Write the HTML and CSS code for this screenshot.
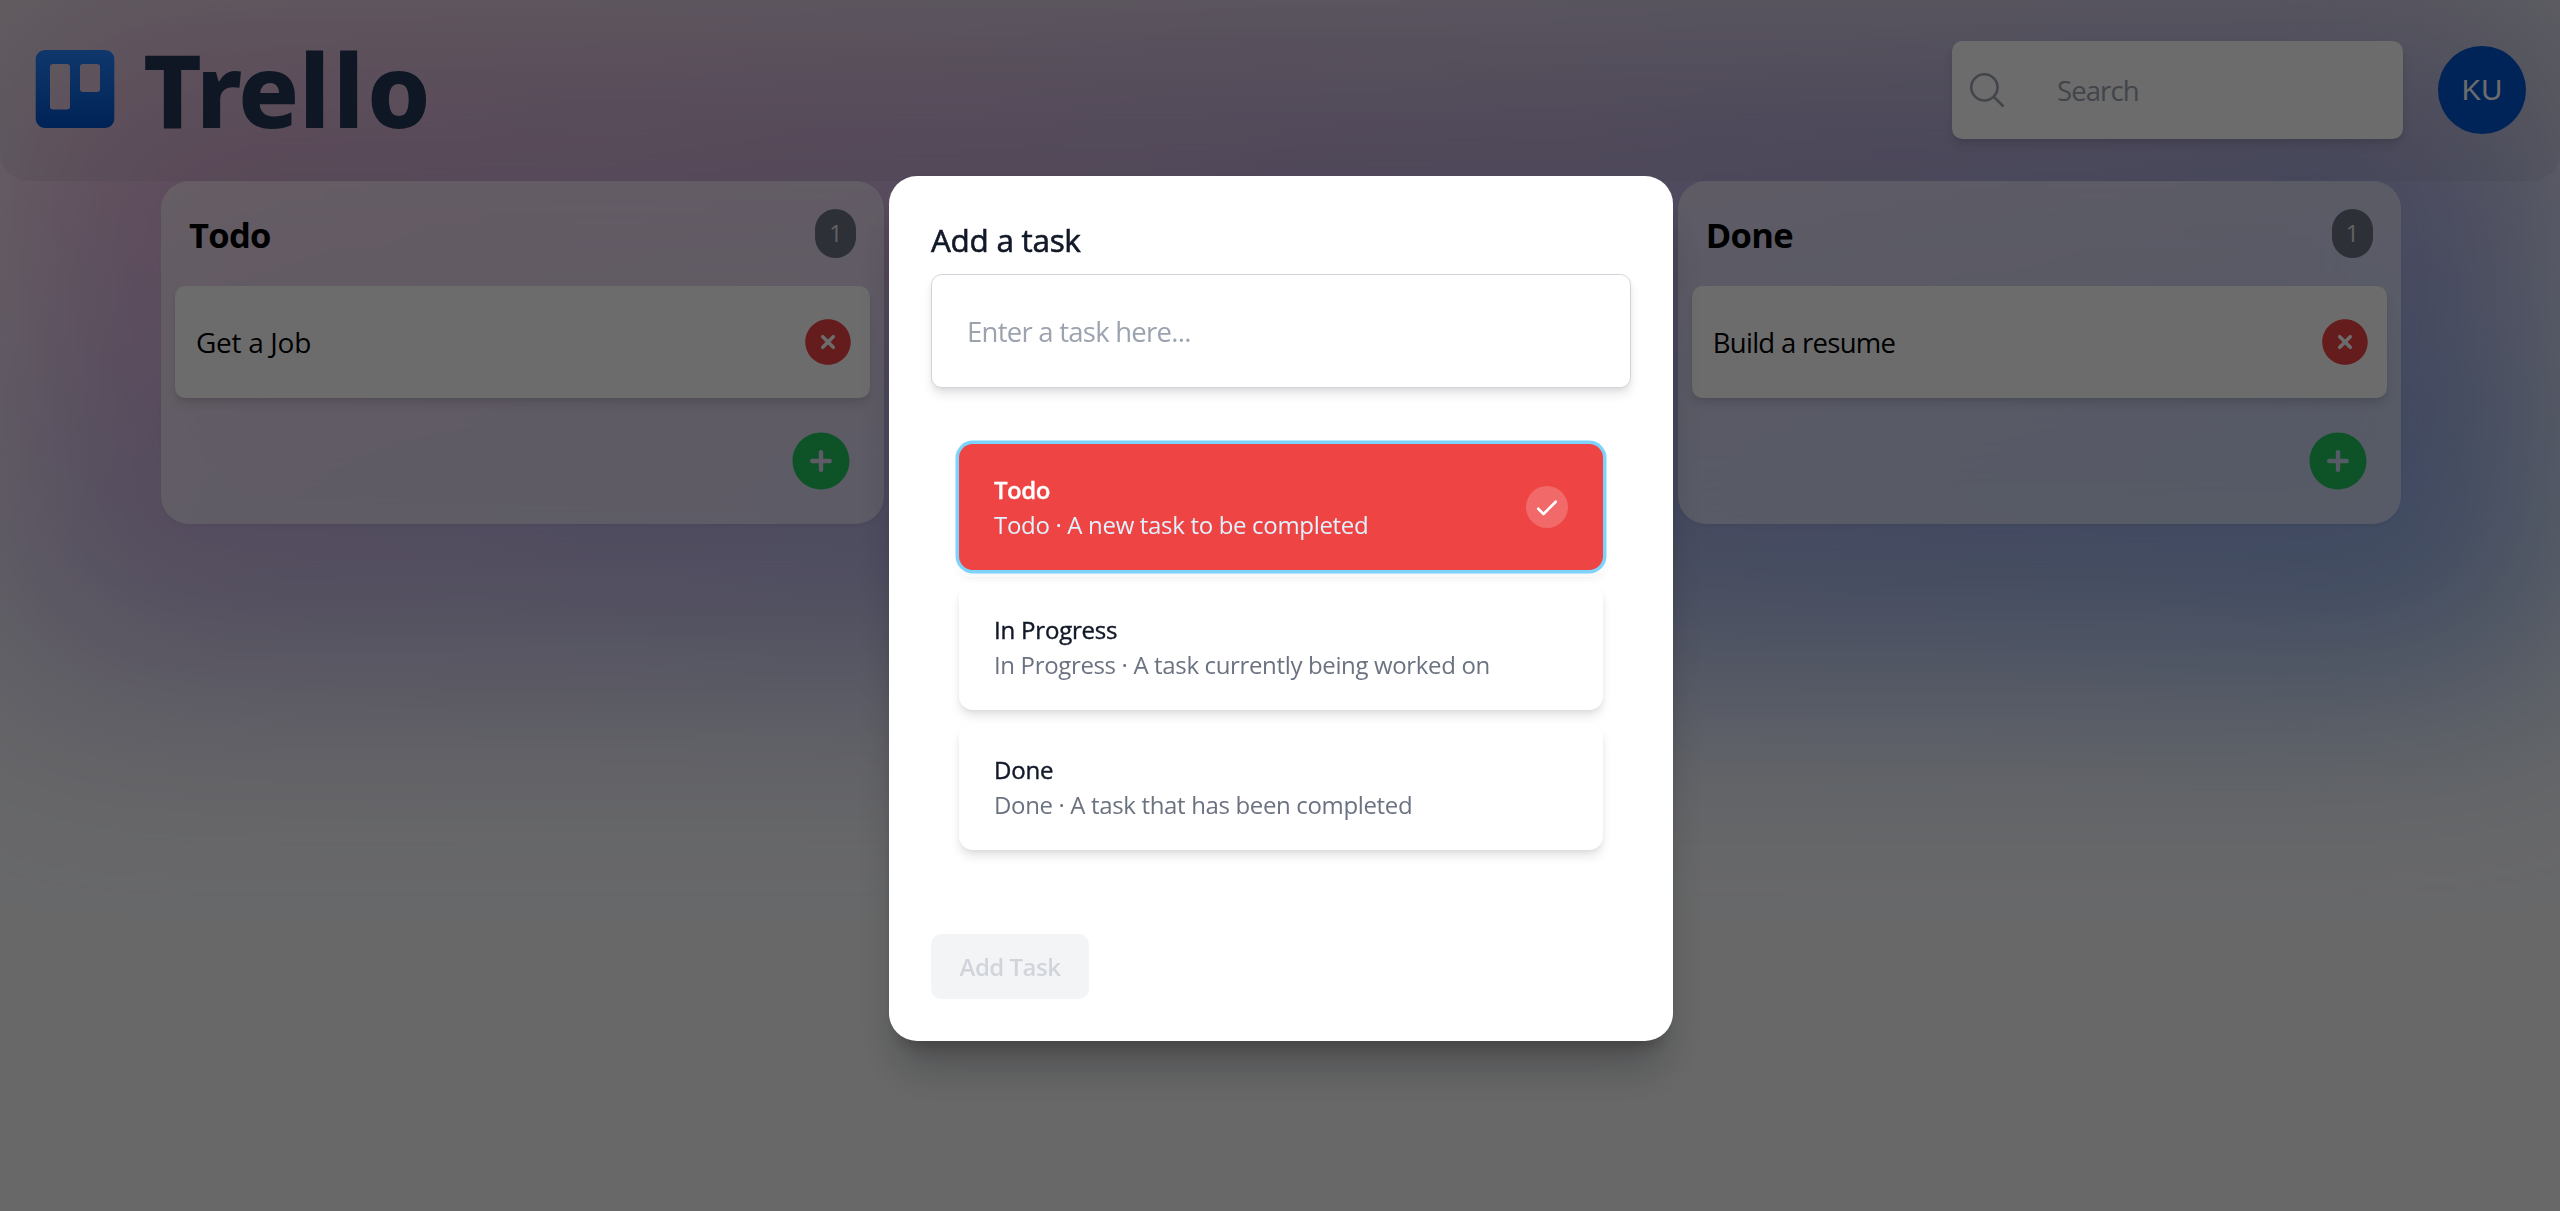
FILE: index.html
```html
<!DOCTYPE html>
<html lang="en">
<head>
<meta charset="utf-8">
<title>Trello</title>
<link rel="stylesheet" href="styles.css">
</head>
<body>
<div class="glow"></div>
<header class="header">
  <svg class="logo" viewBox="0 0 400 146" role="img" aria-label="Trello">
    <defs>
      <linearGradient id="mark" x1="0" y1="1" x2="0" y2="0">
        <stop offset="0" stop-color="#0052cc"/><stop offset="1" stop-color="#2684ff"/>
      </linearGradient>
    </defs>
    <path transform="translate(0 18)" fill="url(#mark)" fill-rule="evenodd" d="M9.700 15H70.300a9 9 0 0 1 9 9V84a9 9 0 0 1-9 9H9.700a9 9 0 0 1-9-9V24a9 9 0 0 1 9-9ZM18 29a3 3 0 0 0-3 3V71.500a3 3 0 0 0 3 3H32a3 3 0 0 0 3-3V32a3 3 0 0 0-3-3ZM48 29a3 3 0 0 0-3 3V54a3 3 0 0 0 3 3H62a3 3 0 0 0 3-3V32a3 3 0 0 0-3-3Z"/>
    <text class="wordmark" x="108 161 203 264 298 332" y="111">Trello</text>
  </svg>
  <div class="tools">
    <form class="search">
      <svg class="search-icon" viewBox="0 0 24 24"><path d="m21 21-5.197-5.197m0 0A7.500 7.500 0 1 0 5.196 5.196a7.500 7.500 0 0 0 10.607 10.607Z"/></svg>
      <input class="search-input" type="text" placeholder="Search">
    </form>
    <div class="avatar"><span>KU</span></div>
  </div>
</header>
<main class="board">
  <section class="column">
    <h2 class="column-head"><span class="column-title">Todo</span><span class="count">1</span></h2>
    <div class="card"><p class="card-text">Get a Job</p>
      <svg class="remove" viewBox="0 0 24 24"><path fill-rule="evenodd" d="M12 2.250c-5.385 0-9.750 4.365-9.750 9.750s4.365 9.750 9.750 9.750 9.750-4.365 9.750-9.750S17.385 2.250 12 2.250zm-1.720 6.970a.75.75 0 10-1.060 1.060L10.940 12l-1.720 1.720a.75.75 0 101.060 1.060L12 13.060l1.720 1.720a.75.75 0 101.060-1.060L13.060 12l1.720-1.720a.75.75 0 10-1.060-1.060L12 10.940l-1.720-1.720z"/></svg>
    </div>
    <div class="column-foot">
      <svg class="add" viewBox="0 0 24 24"><path fill-rule="evenodd" d="M12 2.250c-5.385 0-9.750 4.365-9.750 9.750s4.365 9.750 9.750 9.750 9.750-4.365 9.750-9.750S17.385 2.250 12 2.250zM12.750 9a.75.75 0 00-1.500 0v2.250H9a.75.75 0 000 1.500h2.250V15a.75.75 0 001.500 0v-2.250H15a.75.75 0 000-1.500h-2.250V9z"/></svg>
    </div>
  </section>
  <section class="column last">
    <h2 class="column-head"><span class="column-title">Done</span><span class="count">1</span></h2>
    <div class="card"><p class="card-text tight">Build a resume</p>
      <svg class="remove" viewBox="0 0 24 24"><path fill-rule="evenodd" d="M12 2.250c-5.385 0-9.750 4.365-9.750 9.750s4.365 9.750 9.750 9.750 9.750-4.365 9.750-9.750S17.385 2.250 12 2.250zm-1.720 6.970a.75.75 0 10-1.060 1.060L10.940 12l-1.720 1.720a.75.75 0 101.060 1.060L12 13.060l1.720 1.720a.75.75 0 101.060-1.060L13.060 12l1.720-1.720a.75.75 0 10-1.060-1.060L12 10.940l-1.720-1.720z"/></svg>
    </div>
    <div class="column-foot">
      <svg class="add" viewBox="0 0 24 24"><path fill-rule="evenodd" d="M12 2.250c-5.385 0-9.750 4.365-9.750 9.750s4.365 9.750 9.750 9.750 9.750-4.365 9.750-9.750S17.385 2.250 12 2.250zM12.750 9a.75.75 0 00-1.500 0v2.250H9a.75.75 0 000 1.500h2.250V15a.75.75 0 001.500 0v-2.250H15a.75.75 0 000-1.500h-2.250V9z"/></svg>
    </div>
  </section>
</main>
<div class="overlay">
  <form class="dialog">
    <h3 class="dialog-title">Add a task</h3>
    <input class="task-input" type="text" placeholder="Enter a task here...">
    <div class="options">
      <div class="option selected">
        <div><p class="option-name">Todo</p><p class="option-text">Todo · A new task to be completed</p></div>
        <svg class="check" viewBox="0 0 24 24"><circle cx="12" cy="12" r="12" fill="#fff" fill-opacity=".2"/><path d="M7 13l3 3 7-7" fill="none" stroke="#fff" stroke-width="1.500" stroke-linecap="round" stroke-linejoin="round"/></svg>
      </div>
      <div class="option">
        <div><p class="option-name">In Progress</p><p class="option-text">In Progress · A task currently being worked on</p></div>
      </div>
      <div class="option">
        <div><p class="option-name">Done</p><p class="option-text">Done · A task that has been completed</p></div>
      </div>
    </div>
    <button class="submit" type="submit" disabled>Add Task</button>
  </form>
</div>
</body>
</html>
```
FILE: styles.css
```css
* { box-sizing: border-box; margin: 0; padding: 0; }
html { font-size: 28px; }
body {
  position: relative;
  height: 1211px;
  overflow: hidden;
  background: #f5f6f8;
  color: #000;
  font-family: "Open Sans", "Noto Sans", sans-serif;
}
input, button { font: inherit; border: 0; outline: 0; background: none; }

.glow {
  position: absolute;
  top: 0;
  left: 0;
  z-index: -1;
  width: 100%;
  height: 24rem;
  border-radius: 10.5px;
  background: linear-gradient(to bottom right, #f472b6, #0055d1);
  filter: blur(112px);
  opacity: .5;
}

.header {
  display: flex;
  align-items: center;
  justify-content: space-between;
  height: 181px;
  padding: 0 34px 1px 35px;
  border-radius: 0 0 1rem 1rem;
  background: rgba(107, 114, 128, .1);
}
.logo { width: 400px; height: 146px; overflow: visible; }
.wordmark { font: 800 101px "Noto Sans", "Open Sans", sans-serif; fill: #253858; }
.tools { display: flex; align-items: center; gap: 35px; }
.search {
  display: flex;
  align-items: center;
  gap: 1.25rem;
  width: 451px;
  height: 98px;
  padding: .5rem;
  border-radius: 10.5px;
  background: #fff;
  box-shadow: 0 7px 10.5px -1.75px rgba(0, 0, 0, .1), 0 3.5px 7px -3.5px rgba(0, 0, 0, .1);
}
.search-icon { width: 42px; height: 42px; fill: none; stroke: #9ca3af; stroke-width: 1.5; stroke-linecap: round; stroke-linejoin: round; }
.search-input { flex: 1; min-width: 0; padding: .5rem; font-size: 27.5px; letter-spacing: -.9px; }
.search-input::placeholder, .task-input::placeholder { color: #9ca3af; opacity: 1; }
.avatar {
  display: grid;
  place-items: center;
  width: 88px;
  height: 88px;
  border-radius: 50%;
  background: #0055d1;
  color: #fff;
  font: 29px "Liberation Sans", sans-serif;
}

.board { display: grid; grid-template-columns: repeat(3, 1fr); gap: 35px; width: 2242px; margin: 0 auto; padding-left: 2px; position: relative; }
.column {
  height: 343px;
  padding: .5rem;
  border-radius: 1rem;
  background: rgba(255, 255, 255, .5);
  box-shadow: 0 1.75px 3.5px rgba(0, 0, 0, .05);
}
.last { grid-column: 3; }
.column-head { display: flex; justify-content: space-between; padding: .5rem; }
.column-title { height: 49px; font-size: 34.5px; font-weight: 700; line-height: 52px; letter-spacing: -.7px; }
.count {
  padding: 7px .5rem;
  border-radius: 99px;
  background: #6b7280;
  color: #e5e7eb;
  font-size: 23px;
  font-weight: 400;
  line-height: 35px;
}
.card {
  display: flex;
  align-items: center;
  justify-content: space-between;
  height: 4rem;
  margin-top: .5rem;
  padding: 0 .5rem 0 21px;
  border-radius: 10.5px;
  background: #fff;
  box-shadow: 0 7px 10.5px -1.75px rgba(0, 0, 0, .1), 0 3.5px 7px -3.5px rgba(0, 0, 0, .1);
}
.card-text { font-size: 28px; letter-spacing: -.3px; }
.tight { font-size: 27.5px; letter-spacing: -.7px; }
.remove { width: 56px; height: 56px; fill: #ef4444; }
.column-foot { display: flex; justify-content: flex-end; padding: 28px .5rem 0; }
.add { width: 70px; height: 70px; fill: #22c55e; }

/* The board sits far enough back that only the dialog reads as active. */
.overlay {
  position: fixed;
  inset: 0;
  display: flex;
  align-items: center;
  justify-content: center;
  padding: 6px 0 0 2px;
  background: rgba(0, 0, 0, .578);
}
.dialog {
  width: 28rem;
  height: 865px;
  padding: 1.5rem;
  border-radius: 1rem;
  background: #fff;
  box-shadow: 0 35px 43.75px -8.75px rgba(0, 0, 0, .24), 0 14px 17.5px -10.5px rgba(0, 0, 0, .24);
}
.dialog-title { height: 56px; color: #111827; font-size: 31.5px; font-weight: 500; line-height: 44px; letter-spacing: -.3px; -webkit-text-stroke: .6px #111827; }
.task-input {
  display: block;
  width: 100%;
  height: 114px;
  padding: 1.25rem;
  border: 1px solid #d1d5db;
  border-radius: 10.5px;
  background: #fff;
  box-shadow: 0 7px 10.5px -1.75px rgba(0, 0, 0, .1), 0 3.5px 7px -3.5px rgba(0, 0, 0, .1);
  font-size: 27.5px;
  letter-spacing: -.75px;
}
.options { display: flex; flex-direction: column; gap: .5rem; padding: 2rem 1rem 0; }
.option {
  display: flex;
  align-items: center;
  justify-content: space-between;
  height: 126px;
  padding: 0 1.25rem;
  border-radius: .5rem;
  background: #fff;
  box-shadow: 0 7px 10.5px -1.75px rgba(0, 0, 0, .1), 0 3.5px 7px -3.5px rgba(0, 0, 0, .1);
}
.option-name { color: #111827; font-size: 24px; font-weight: 500; line-height: 35px; letter-spacing: -.2px; -webkit-text-stroke: .4px #111827; }
.option-text { color: #6b7280; font-size: 24px; line-height: 35px; letter-spacing: -.35px; }
.selected { background: #ef4444; box-shadow: 0 0 0 3.5px #7dd3fc, 0 0 0 7px rgba(255, 255, 255, .6), 0 7px 10.5px -1.75px rgba(0, 0, 0, .1), 0 3.5px 7px -3.5px rgba(0, 0, 0, .1); }
.selected .option-name { color: #fff; font-weight: 600; letter-spacing: -.5px; -webkit-text-stroke: .3px #fff; }
.selected .option-text { color: #e0f2fe; letter-spacing: -.32px; }
.check { width: 42px; height: 42px; }
.submit {
  width: 158px;
  height: 65px;
  margin-top: 3rem;
  border-radius: 10.5px;
  background: #f3f4f6;
  color: #d1d5db;
  font-size: 24px;
  font-weight: 600;
  letter-spacing: -.5px;
}
```
